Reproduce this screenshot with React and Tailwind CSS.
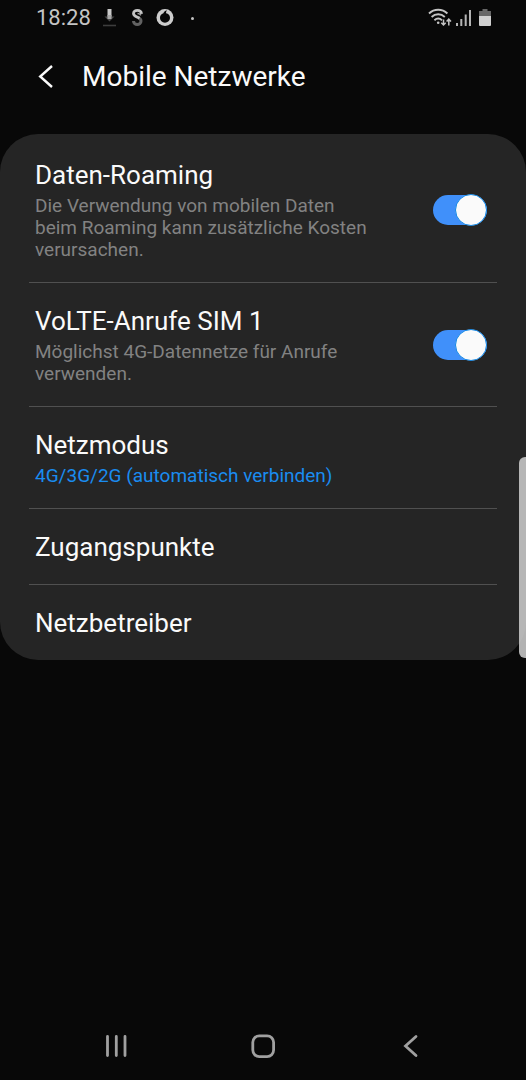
import React, { useState } from "react";

const StatusBar = () => {
  return (
    <div className="flex items-center justify-between h-9 pl-9 pr-[35px]">
      <div className="flex items-center">
        <span className="text-[22px] leading-6 text-[#c4c4c4]">18:28</span>
        <svg className="ml-[10px] w-4 h-5" viewBox="0 0 16 20" fill="none">
          <path d="M6.500 1h4v8.500h-4z" fill="#c8c8c8" />
          <path d="M3.500 8.500h10l-5 5z" fill="#4a4a4a" />
          <path d="M6.500 7h4v4h-4z" fill="#a8a8a8" />
          <path d="M2 17.500h13" stroke="#3d3d3d" strokeWidth="1.600" />
        </svg>
        <svg className="ml-3 w-4 h-5" viewBox="0 0 16 20" fill="none">
          <path
            d="M4.500 13c0 4.700 7.500 4.700 7.500 0 0-1.600-1-2.600-2.800-3.400"
            stroke="#626262"
            strokeWidth="3"
          />
          <path
            d="M12.500 5.800C12 1.300 4.500 1.500 4.500 5.400c0 2.600 3 3.200 6 4.800"
            stroke="#c4c4c4"
            strokeWidth="2.800"
          />
          <path
            d="M8.500 5.500c1.800 0 2.500.6 3.500 1.700"
            stroke="#a0a0a0"
            strokeWidth="1.500"
          />
        </svg>
        <svg className="ml-[11px] w-[18px] h-5" viewBox="0 0 18 20">
          <circle cx="9" cy="9.500" r="8.500" fill="#cdcdcd" />
          <path
            d="M11 2.200C9 2.800 7.600 4.200 7.400 5.300 5.200 6 4 7.800 4 9.800c0 2.800 2.200 4.900 5 4.900s5-2.100 5-4.900c0-2.500-1.600-4-3.900-4.500-.2-1.100.2-2.200.9-3.100z"
            fill="#080808"
          />
        </svg>
        <span className="ml-[17px] size-[3px] rounded-full bg-[#c4c4c4]" />
      </div>

      <div className="flex items-center">
        <svg className="w-6 h-5" viewBox="0 0 24 20" fill="none">
          <path
            d="M1 5.500c5.200-5 13.200-5 18.400 0M3.600 9c3.800-3.600 9.400-3.600 13.200 0M6.400 12.200c2.300-2 5.300-2 7.600 0"
            stroke="#c4c4c4"
            strokeWidth="1.900"
          />
          <circle cx="10.200" cy="14.800" r="1.300" fill="#c4c4c4" />
          <path
            d="M15.500 11.500v5M13.300 14.700l2.200 2.300 2.200-2.300M20.800 17.500v-6M18.600 13.500l2.200-2.300 2.200 2.300"
            stroke="#c4c4c4"
            strokeWidth="1.500"
          />
        </svg>
        <svg className="ml-1 w-4 h-5" viewBox="0 0 16 20" fill="#b4b4b4">
          <path d="M0 15h2v3H0zM4.300 11h2v7h-2zM8.700 6.500h2V18h-2zM13 2h2v16h-2z" />
        </svg>
        <svg className="ml-[7px] w-3 h-5" viewBox="0 0 12 20">
          <path d="M3.500 1h5v2H12v5H0V3h3.500z" fill="#666" />
          <path d="M0 8h12v9a1 1 0 0 1-1 1H1a1 1 0 0 1-1-1z" fill="#cfcfcf" />
        </svg>
      </div>
    </div>
  );
};

const SettingText = ({ title, description, active }) => {
  return (
    <span className="block">
      <span className="block text-[26px] leading-8 text-[#fafafa]">{title}</span>
      {description && (
        <span
          className={`block mt-1 text-[19px] leading-[22px] ${
            active ? "text-[#1a8cf0]" : "text-[#828282]"
          }`}
        >
          {description}
        </span>
      )}
    </span>
  );
};

const SwitchRow = ({ id, title, description }) => {
  const [isOn, setIsOn] = useState(true);

  return (
    <li className="border-b border-[#505050]">
      <label
        htmlFor={id}
        className="flex items-center justify-between gap-14 pl-1.5 pr-[10px] pt-[22px] pb-[21px]"
      >
        <SettingText title={title} description={description} />
        <input
          id={id}
          type="checkbox"
          role="switch"
          checked={isOn}
          onChange={() => setIsOn(!isOn)}
          className="appearance-none shrink-0 flex items-center w-[54px] h-[30px] rounded-full bg-[#6b6b6b] checked:bg-[#4090fa] checked:justify-end before:size-8 before:shrink-0 before:rounded-full before:border before:border-[#1287e6] before:bg-[#fafafa]"
        />
      </label>
    </li>
  );
};

const LinkRow = ({ title, description }) => {
  return (
    <li className="border-b border-[#505050] last:border-b-0">
      <button
        type="button"
        className="block w-full px-1.5 pt-[22px] pb-[21px] text-left"
      >
        <SettingText title={title} description={description} active />
      </button>
    </li>
  );
};

const NavigationBar = () => {
  return (
    <nav className="grid grid-cols-3 h-[68px] px-[42px] text-[#a0a0a0]">
      <button
        type="button"
        aria-label="Letzte Apps"
        className="flex items-center justify-center"
      >
        <svg className="size-6" viewBox="0 0 24 24" fill="none">
          <path
            d="M3.500 2.500v19M12.300 2.500v19M21 2.500v19"
            stroke="currentColor"
            strokeWidth="2.800"
            strokeLinecap="round"
          />
        </svg>
      </button>
      <button
        type="button"
        aria-label="Startseite"
        className="flex items-center justify-center"
      >
        <svg className="size-6" viewBox="0 0 24 24" fill="none">
          <rect
            x="1.800"
            y="1.800"
            width="20.800"
            height="20.800"
            rx="6.500"
            stroke="currentColor"
            strokeWidth="2.800"
          />
        </svg>
      </button>
      <button
        type="button"
        aria-label="Zurück"
        className="flex items-center justify-center"
      >
        <svg className="size-6" viewBox="0 0 24 24" fill="none">
          <path
            d="M18 2.500L7.500 12 18 21.500"
            stroke="currentColor"
            strokeWidth="2.800"
            strokeLinecap="round"
          />
        </svg>
      </button>
    </nav>
  );
};

const App = () => {
  return (
    <div className="relative flex flex-col min-h-screen bg-[#080808] font-[Roboto,sans-serif]">
      <StatusBar />

      <header className="flex items-center h-[82px] pl-[34px] mb-4 text-[#fafafa]">
        <button type="button" aria-label="Zurück">
          <svg className="size-6" viewBox="0 0 24 24" fill="none">
            <path
              d="M18 1L6.200 11.500 18 22"
              stroke="currentColor"
              strokeWidth="2.400"
            />
          </svg>
        </button>
        <h1 className="ml-6 text-[28px] leading-8">Mobile Netzwerke</h1>
      </header>

      <main className="grow">
        <ul className="px-[29px] pt-[3px] rounded-[38px] bg-[#252525]">
          <SwitchRow
            id="roaming"
            title="Daten-Roaming"
            description="Die Verwendung von mobilen Daten beim Roaming kann zusätzliche Kosten verursachen."
          />
          <SwitchRow
            id="volte"
            title="VoLTE-Anrufe SIM 1"
            description="Möglichst 4G-Datennetze für Anrufe verwenden."
          />
          <LinkRow
            title="Netzmodus"
            description="4G/3G/2G (automatisch verbinden)"
          />
          <LinkRow title="Zugangspunkte" />
          <LinkRow title="Netzbetreiber" />
        </ul>
      </main>

      <NavigationBar />

      {/* edge panel handle */}
      <div className="absolute right-0 top-[457px] w-[7px] h-[201px] rounded-l-md bg-[#d0d0d0]/85" />
    </div>
  );
};

export default App;
